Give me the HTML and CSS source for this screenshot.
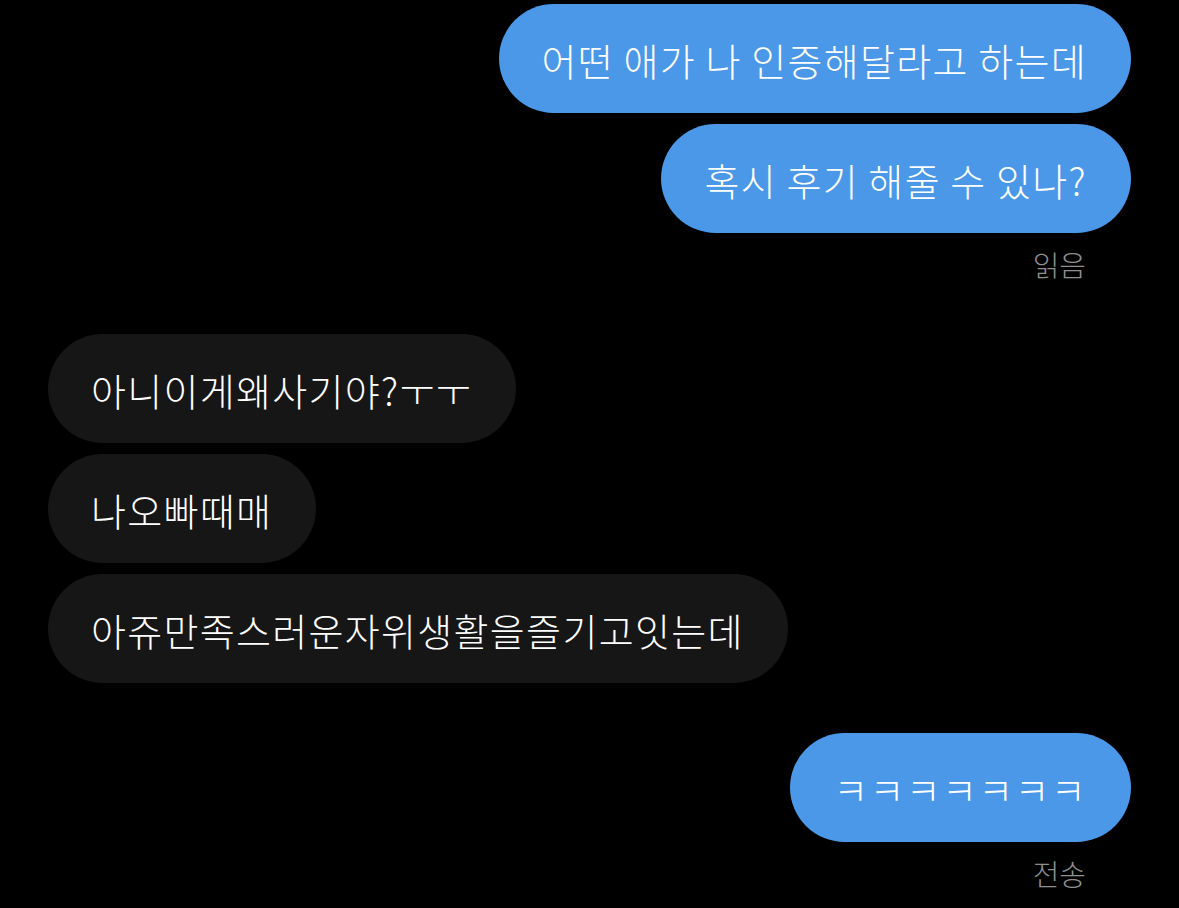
FILE: index.html
```html
<!DOCTYPE html>
<html lang="ko">
<head>
<meta charset="utf-8">
<link rel="stylesheet" href="styles.css">
</head>
<body>
<main class="chat">
  <section class="group group-out">
    <div class="bubble out">어떤 애가 나 인증해달라고 하는데</div>
    <div class="bubble out">혹시 후기 해줄 수 있나?</div>
    <div class="status">읽음</div>
  </section>
  <section class="group group-in">
    <div class="bubble in">아니이게왜사기야?ㅜㅜ</div>
    <div class="bubble in">나오빠때매</div>
    <div class="bubble in">아쥬만족스러운자위생활을즐기고잇는데</div>
  </section>
  <section class="group group-out last">
    <div class="bubble out">ㅋㅋㅋㅋㅋㅋㅋ</div>
    <div class="status">전송</div>
  </section>
</main>
</body>
</html>
```
FILE: styles.css
```css
html, body {
  margin: 0;
  padding: 0;
  background: #000;
}
body {
  width: 1179px;
  height: 908px;
  overflow: hidden;
  font-family: "Noto Sans CJK KR", "Noto Sans", sans-serif;
  color: #fff;
}
.chat {
  display: flex;
  flex-direction: column;
  padding: 4px 48px 0 48px;
}
.group {
  display: flex;
  flex-direction: column;
  gap: 11px;
}
.group-out {
  align-items: flex-end;
}
.group-in {
  align-items: flex-start;
  margin-top: 50px;
}
.group-out.last {
  margin-top: 50px;
}
.bubble {
  height: 109px;
  box-sizing: border-box;
  border-radius: 55px;
  padding: 2px 44px 0 43px;
  display: flex;
  align-items: center;
  font-size: 38px;
  font-weight: 300;
  line-height: 1;
  letter-spacing: 1.3px;
  word-spacing: -2.5px;
  white-space: nowrap;
}
.bubble.out {
  background: #4a98e7;
}
.bubble.in {
  background: #161616;
}
.status {
  margin-top: 0;
  padding-right: 45px;
  font-size: 29px;
  font-weight: 300;
  line-height: 40px;
  color: #8f8f8f;
}
```
